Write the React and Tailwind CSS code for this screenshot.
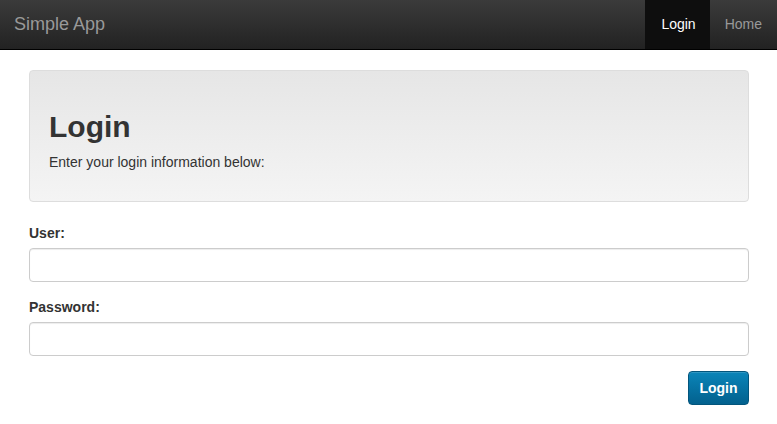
export default function App() {
  return (
    <div className="min-h-[424px] bg-white text-[#333] font-['Liberation_Sans',Arial,sans-serif] text-[14px]">
      <div className="h-[50px] bg-gradient-to-b from-[#3b3b3b] to-[#222] border-b border-black flex items-stretch">
        <div className="pl-[14px] flex items-center text-[18px] text-[#999]">Simple App</div>
        <div className="ml-auto flex items-stretch">
          <div className="pl-[16px] pr-[14px] flex items-center bg-[#0e0e0e] text-white">Login</div>
          <div className="px-[15px] flex items-center text-[#999]">Home</div>
        </div>
      </div>
      <div className="pl-[29px] pr-[28px] pt-[20px]">
        <div className="rounded-[4px] border border-[#ddd] bg-gradient-to-b from-[#e6e6e6] to-[#f4f4f4] pl-[19px] pt-[38px] pb-[29px]">
          <h1 className="text-[30px] leading-[36px] font-bold text-[#333]">Login</h1>
          <p className="mt-[7px] leading-[20px]">Enter your login information below:</p>
        </div>
        <div className="mt-[21px] font-bold leading-[20px]">User:</div>
        <div className="mt-[5px] h-[34px] rounded-[4px] border border-[#ccc] bg-white shadow-[inset_0_1px_1px_rgba(0,0,0,0.075)]"></div>
        <div className="mt-[15px] font-bold leading-[20px]">Password:</div>
        <div className="mt-[5px] h-[34px] rounded-[4px] border border-[#ccc] bg-white shadow-[inset_0_1px_1px_rgba(0,0,0,0.075)]"></div>
        <div className="mt-[15px] flex justify-end">
          <button className="h-[34px] w-[61px] rounded-[4px] border border-[#03557c] bg-gradient-to-b from-[#0b85b9] to-[#03618e] text-white font-bold text-[14px] shadow-[inset_0_1px_0_rgba(255,255,255,0.15)]">Login</button>
        </div>
      </div>
    </div>
  );
}
